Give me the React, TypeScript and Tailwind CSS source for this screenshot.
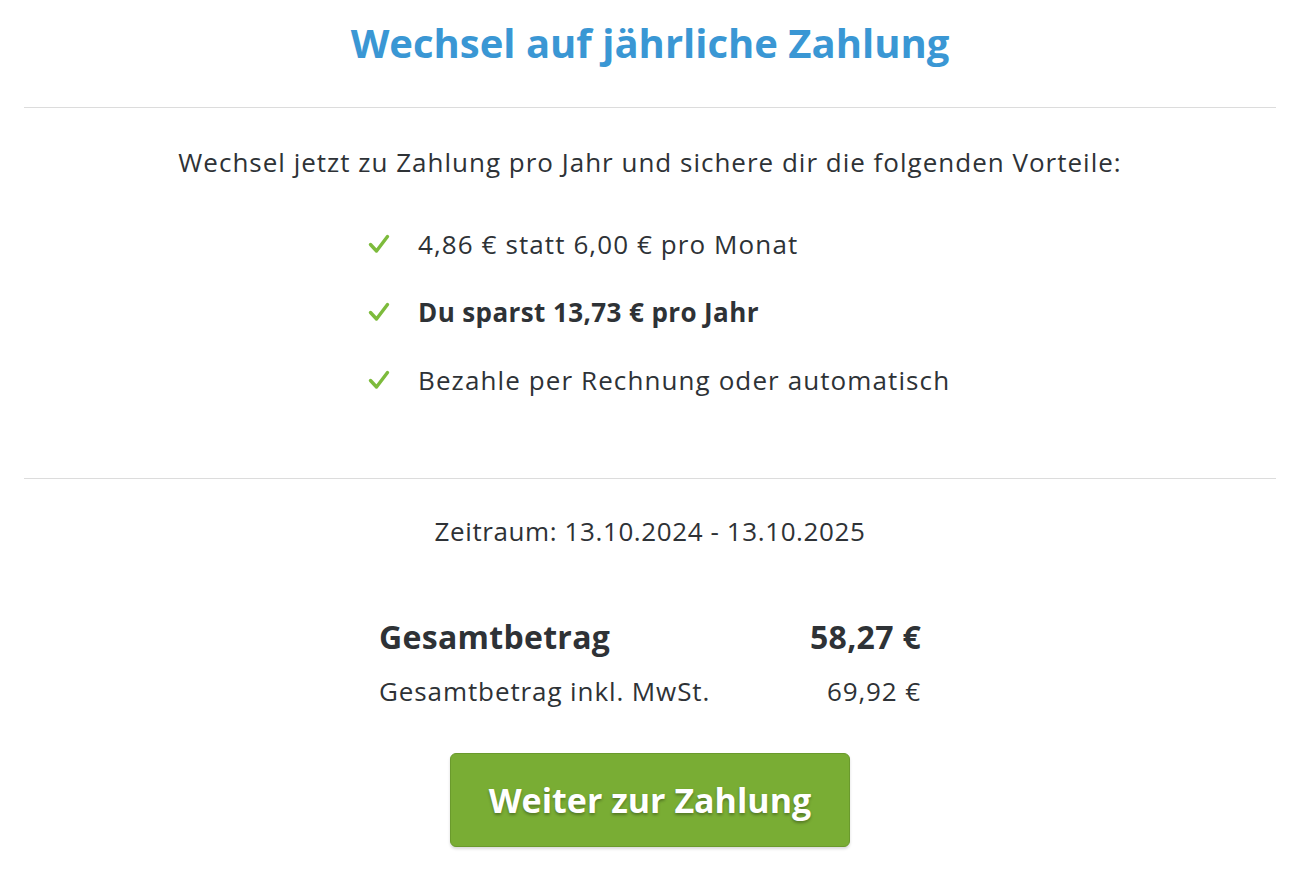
import React from 'react';

const benefits = [
  { text: '4,86 € statt 6,00 € pro Monat', bold: false },
  { text: 'Du sparst 13,73 € pro Jahr', bold: true },
  { text: 'Bezahle per Rechnung oder automatisch', bold: false },
];

const Check = () => (
  <svg width="22" height="22" viewBox="0 0 22 22" className="shrink-0">
    <path d="M2.5 11.5 L8.5 18 L19.5 3.5" fill="none" stroke="#7dbb3c" strokeWidth="3.4" strokeLinecap="round" strokeLinejoin="round" />
  </svg>
);

const App = () => {
  return (
    <div className="w-full min-h-[876px] bg-white text-[#2e3236] font-['Open_Sans','Lato',sans-serif]">
      <div className="pl-6 pr-[30px]">
        <h1 className="pt-[17px] pb-[38px] text-center text-[40px] leading-[52px] font-bold text-[#3a97d4]">
          Wechsel auf jährliche Zahlung
        </h1>
        <div className="border-t border-[#dcdcdc]" />

        <p className="pt-[38px] text-center text-[26px] leading-[32px] tracking-[1px]">
          Wechsel jetzt zu Zahlung pro Jahr und sichere dir die folgenden Vorteile:
        </p>

        <ul className="mt-[50px] mx-auto w-[564px] flex flex-col gap-[36px] pb-[82px]">
          {benefits.map((b) => (
            <li key={b.text} className="flex items-center gap-[28px] text-[26px] leading-[32px] tracking-[1.1px] whitespace-nowrap">
              <Check />
              <span className={b.bold ? 'font-bold tracking-[0.4px]' : ''}>{b.text}</span>
            </li>
          ))}
        </ul>

        <div className="border-t border-[#dcdcdc]" />

        <p className="pt-[36px] text-center text-[26px] leading-[32px] tracking-[0.6px]">
          Zeitraum: 13.10.2024 - 13.10.2025
        </p>

        <div className="mt-[70px] mx-auto w-[542px] flex flex-col">
          <div className="flex justify-between items-baseline text-[32px] leading-[40px] font-bold tracking-[0.3px]">
            <span>Gesamtbetrag</span>
            <span>58,27 €</span>
          </div>
          <div className="mt-[18px] flex justify-between items-baseline text-[26px] leading-[32px] tracking-[0.9px]">
            <span>Gesamtbetrag inkl. MwSt.</span>
            <span>69,92 €</span>
          </div>
        </div>

        <div className="mt-[46px] flex justify-center">
          <button className="w-[400px] h-[94px] rounded-[6px] bg-[#79ad34] border border-[#6a9a2c] shadow-[0_2px_3px_rgba(0,0,0,0.15)] text-white text-[34px] font-bold [text-shadow:0_2px_3px_rgba(0,0,0,0.3)]">
            Weiter zur Zahlung
          </button>
        </div>
      </div>
    </div>
  );
};

export default App;
